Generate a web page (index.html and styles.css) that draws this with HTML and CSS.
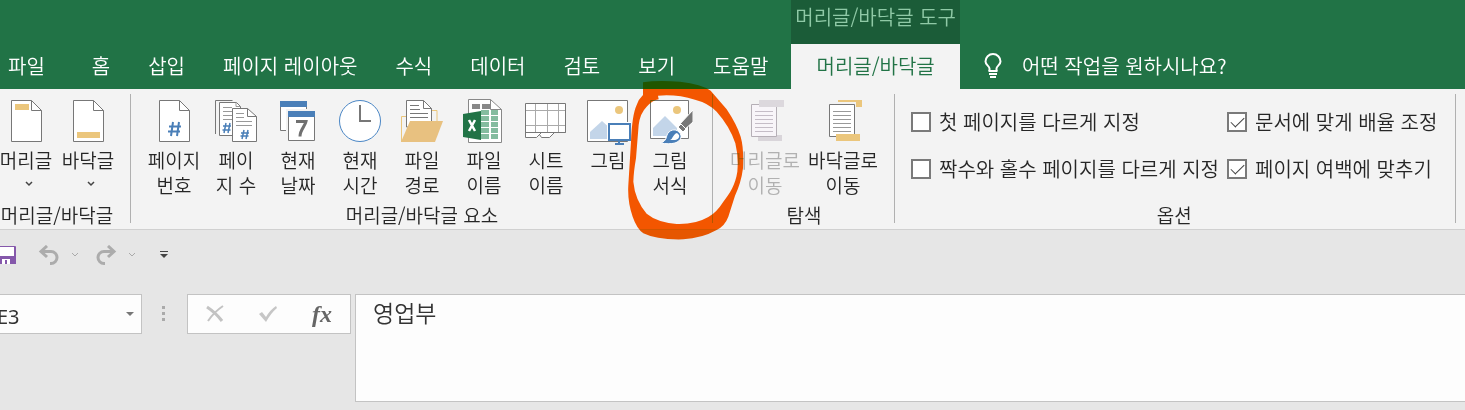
FILE: index.html
```html
<!DOCTYPE html>
<html lang="ko">

<head>
    <meta charset="UTF-8">
    <meta name="viewport" content="width=device-width, initial-scale=1.0">
    <title>머리글/바닥글</title>

    <link rel="stylesheet" href="styles.css">
</head>

<body>
    <header class="top">
        <nav class="tabs">
            <a class="tab file" href="#">파일</a>
            <a class="tab" href="#">홈</a>
            <a class="tab" href="#">삽입</a>
            <a class="tab" href="#">페이지 레이아웃</a>
            <a class="tab" href="#">수식</a>
            <a class="tab" href="#">데이터</a>
            <a class="tab" href="#">검토</a>
            <a class="tab" href="#">보기</a>
            <a class="tab" href="#">도움말</a>
            <div class="context">
                <span class="context-title">머리글/바닥글 도구</span>
                <a class="tab active" href="#">머리글/바닥글</a>
            </div>
        </nav>
        <button class="tell-me">
            <svg width="18" height="26" viewBox="0 0 18 26" fill="none" stroke="#fff" stroke-width="2">
                <path d="M5.500 18v-2.500C5.500 13 1.500 12 1.500 8.500a7.500 7.500 0 0 1 15 0C16.500 12 12.500 13 12.500 15.500V18" />
                <path d="M4.500 18h9M5 21h8M6 24h6" />
            </svg>
            <span>어떤 작업을 원하시나요?</span>
        </button>
    </header>

    <main class="ribbon">
        <section class="group first">
            <div class="tools">
                <button class="tool">
                    <svg width="44" height="44" viewBox="0 0 44 44">
                        <path d="M7.500 1.500h20l10 10v31h-30z" fill="#fff" stroke="#777" />
                        <path d="M27.500 1.500v10h10" fill="none" stroke="#777" />
                        <path d="M11 5h14v6H11z" fill="#ebc67c" />
                    </svg>
                    <span>머리글</span>
                    <svg class="chevron" width="8" height="6" viewBox="0 0 8 6"><path d="M1 1l3 3 3-3" fill="none" stroke="#444" stroke-width="1.500" /></svg>
                </button>
                <button class="tool">
                    <svg width="44" height="44" viewBox="0 0 44 44">
                        <path d="M7.500 1.500h20l10 10v31h-30z" fill="#fff" stroke="#777" />
                        <path d="M27.500 1.500v10h10" fill="none" stroke="#777" />
                        <path d="M11 33h23v6H11z" fill="#ebc67c" />
                    </svg>
                    <span>바닥글</span>
                    <svg class="chevron" width="8" height="6" viewBox="0 0 8 6"><path d="M1 1l3 3 3-3" fill="none" stroke="#444" stroke-width="1.500" /></svg>
                </button>
            </div>
            <h2>머리글/바닥글</h2>
        </section>

        <section class="group elements">
            <div class="tools">
                <button class="tool">
                    <svg width="44" height="44" viewBox="0 0 44 44">
                        <path d="M7.500 1.500h20l10 10v31h-30z" fill="#fff" stroke="#777" />
                        <path d="M27.500 1.500v10h10" fill="none" stroke="#777" />
                        <path d="M21 23l-2 14M27 23l-2 14M17 27.500h12M16 32.500h12" fill="none" stroke="#4a7fb8" stroke-width="2" />
                    </svg>
                    <span>페이지<br>번호</span>
                </button>
                <button class="tool">
                    <svg width="44" height="44" viewBox="0 0 44 44" fill="none" stroke="#777">
                        <path d="M1.500 35V1.500h17" />
                        <path d="M5.500 3.500h17l4 4v29h-21z" fill="#fff" />
                        <path d="M22 3.500v4h4M9 8.500h9M9 12.500h13M9 16.500h10M9 20.500h9" stroke="#999" />
                        <path d="M18.500 9.500h15l9 8v25h-24z" fill="#fff" />
                        <path d="M33.500 9.500v8h9" />
                        <path d="M22 14.500h8M22 18.500h8M22 22.500h16M22 26.500h16" stroke="#999" />
                        <path d="M12 24l-2 10M16 24l-2 10M9 27h8M8.500 31h8M30 31l-2 9M34 31l-2 9M27 34h8M26.500 37h8" stroke="#4a7fb8" stroke-width="1.500" />
                    </svg>
                    <span>페이<br>지 수</span>
                </button>
                <button class="tool">
                    <svg width="44" height="44" viewBox="0 0 44 44">
                        <path d="M4.500 2.500h26v29h-26z" fill="#fff" stroke="#777" />
                        <path d="M4 2h27v6H4z" fill="#4a7fb8" />
                        <path d="M10 10h30v34H10z" fill="#f3f3f3" />
                        <path d="M12.500 12.500h26v29h-26z" fill="#fff" stroke="#777" />
                        <path d="M12 12h27v6H12z" fill="#4a7fb8" />
                        <path d="M20 22.500h10c-1 5-6 8-6 15" fill="none" stroke="#707070" stroke-width="3" />
                    </svg>
                    <span>현재<br>날짜</span>
                </button>
                <button class="tool">
                    <svg width="44" height="44" viewBox="0 0 44 44">
                        <circle cx="22" cy="22" r="20.500" fill="#fff" stroke="#4a86c5" />
                        <path d="M22 6v16h11" fill="none" stroke="#777" stroke-width="2" />
                    </svg>
                    <span>현재<br>시간</span>
                </button>
                <button class="tool">
                    <svg width="44" height="44" viewBox="0 0 44 44">
                        <path d="M1.500 43V17.500h5M32 11.500h5V25" fill="none" stroke="#ebc67c" />
                        <path d="M6.500 28V1.500h17l8 8V28z" fill="#fff" stroke="#777" />
                        <path d="M23.500 1.500v8h8" fill="none" stroke="#777" />
                        <path d="M10 6.500h9M10 10.500h10M10 14.500h18M10 18.500h18" stroke="#777" />
                        <path d="M1 43l9-21h33l-8 21z" fill="#e8c180" />
                    </svg>
                    <span>파일<br>경로</span>
                </button>
                <button class="tool">
                    <svg width="44" height="44" viewBox="0 0 44 44">
                        <path d="M6.500.500h22l11 10v33h-33z" fill="#fff" stroke="#888" />
                        <path d="M28.500.500v10h11" fill="none" stroke="#888" />
                        <path d="M10 5h8v5h-8zM20 5h8v5h-8z" fill="#888" />
                        <path d="M19 11h8v5h-8zM29 11h7v5h-7zM19 17h8v5h-8zM29 17h7v5h-7zM19 23h8v5h-8zM29 23h7v5h-7zM19 29h8v5h-8zM29 29h7v5h-7zM19 35h8v5h-8zM29 35h7v5h-7z" fill="#84bc9f" />
                        <path d="M1 15l18-3v29L1 38z" fill="#217346" />
                        <path d="M7 21l6 11M13 21L7 32" stroke="#fff" stroke-width="2.500" />
                    </svg>
                    <span>파일<br>이름</span>
                </button>
                <button class="tool">
                    <svg width="44" height="44" viewBox="0 0 44 44" fill="none" stroke="#777">
                        <path d="M1.500 4.500h40v29h-11l-5 5h-8l-2-3-3 3h-11z" fill="#fff" />
                        <path d="M11.500 5v28M23.500 5v28M34.500 5v28M2 11.500h39M2 26.500h39" stroke="#aaa" />
                        <path d="M1.500 33.500h40M17 34l-4 4" />
                    </svg>
                    <span>시트<br>이름</span>
                </button>
                <button class="tool">
                    <svg width="46" height="46" viewBox="0 0 46 46">
                        <path d="M2.500 1.500h40v41h-40z" fill="#fff" stroke="#777" />
                        <circle cx="34" cy="11" r="4" fill="#ebc67c" />
                        <path d="M5 40V33l12-11 10 9v9z" fill="#c3d5e9" />
                        <path d="M22 23h26v19H22z" fill="#fff" />
                        <path d="M24 25h21v16H24z" fill="#fff" stroke="#4a7fb8" stroke-width="2" />
                        <path d="M34 41v3M30 45h9" stroke="#4a7fb8" stroke-width="2" />
                    </svg>
                    <span>그림</span>
                </button>
                <button class="tool marked">
                    <svg width="46" height="46" viewBox="0 0 46 46">
                        <path d="M3.500 1.500h38v38h-38z" fill="#fff" stroke="#777" />
                        <circle cx="30" cy="11" r="4" fill="#ebc67c" />
                        <path d="M6 37V29l12-12 12 12v8z" fill="#c3d5e9" />
                        <path d="M46 11v12l-9 8-5-5z" fill="#777" stroke="#fff" />
                        <path d="M34 25l5 5-3 3-5-5z" fill="#777" stroke="#fff" />
                        <path d="M13 44c5-1 6-4 7-8 2-5 8-7 12-3s2 9-4 11c-4 1-9 1-15 0z" fill="#4a7fb8" stroke="#fff" />
                        <path d="M23 41c3-1 3-6 7-7l2 2c1 3-2 5-5 5z" fill="#fff" />
                    </svg>
                    <span>그림<br>서식</span>
                    <svg class="marker" width="140" height="165" viewBox="0 0 420 495">
                        <path fill-rule="evenodd" d="M69 60V22Q110 15 180 20Q245 27 272 47L320 103Q350 148 362 185Q372 220 369 280Q363 325 345 362L325 425Q315 452 290 465Q245 490 190 493Q110 495 70 475Q50 460 38 425Q22 380 25 330L33 200Q36 120 50 90Q56 72 69 60ZM116 73L114 62Q170 57 225 74Q265 84 290 110Q330 155 346 205Q356 245 352 290C346 330 330 354 310 380Q290 412 265 426Q225 449 170 447Q110 441 80 416Q45 375 40 320Q41 290 48 250L56 150Q60 115 80 95Q98 76 116 73Z" />
                    </svg>
                </button>
            </div>
            <h2>머리글/바닥글 요소</h2>
        </section>

        <section class="group navigate">
            <div class="tools">
                <button class="tool wide" disabled>
                    <svg width="44" height="44" viewBox="0 0 44 44">
                        <path d="M15 36h24v6H15z" fill="#d9d5da" />
                        <path d="M8.500 5.500h25v32h-25z" fill="#f8f5f9" stroke="#b5afb6" />
                        <path d="M12 12.500h18M12 16.500h18M12 20.500h18M12 24.500h18M12 28.500h18M12 32.500h18" stroke="#c5bdc7" />
                        <path d="M16 1h25v7H16z" fill="#dcd8dd" />
                    </svg>
                    <span>머리글로<br>이동</span>
                </button>
                <button class="tool wide">
                    <svg width="44" height="44" viewBox="0 0 44 44">
                        <path d="M17 1h24v7H17z" fill="#ebc67c" />
                        <path d="M6 3h29v36H6z" fill="#f3f3f3" />
                        <path d="M8.500 5.500h25v32h-25z" fill="#fff" stroke="#777" />
                        <path d="M12 12.500h18M12 16.500h18M12 20.500h18M12 24.500h18M12 28.500h18M12 32.500h18" stroke="#999" />
                        <path d="M15 35h24v7H15z" fill="#ebc67c" />
                    </svg>
                    <span>바닥글로<br>이동</span>
                </button>
            </div>
            <h2>탐색</h2>
        </section>

        <section class="group options">
            <div class="checks">
                <label><input type="checkbox">첫 페이지를 다르게 지정</label>
                <label><input type="checkbox" checked>문서에 맞게 배율 조정</label>
                <label><input type="checkbox">짝수와 홀수 페이지를 다르게 지정</label>
                <label><input type="checkbox" checked>페이지 여백에 맞추기</label>
            </div>
            <h2>옵션</h2>
        </section>
    </main>

    <div class="quick">
        <button aria-label="저장">
            <svg width="16" height="20" viewBox="0 0 16 20">
                <path d="M0 1h15q1 0 1 1v17H0z" fill="#8558ab" />
                <path d="M0 2h14v9H0zM2 14h8v5H7v-4H5v4H2z" fill="#fff" />
            </svg>
        </button>
        <button class="undo" aria-label="실행 취소">
            <svg width="22" height="20" viewBox="0 0 22 20" fill="none" stroke="#acacac" stroke-width="3"><path d="M9 1L3 6.500 9 12M3 6.500h10a6 6 0 0 1 0 12h-1" /></svg>
        </button>
        <button class="arrow" aria-label="실행 취소 목록">
            <svg width="8" height="6" viewBox="0 0 8 6"><path d="M1 1l3 3 3-3" fill="none" stroke="#aaa" /></svg>
        </button>
        <button class="redo" aria-label="다시 실행">
            <svg width="22" height="20" viewBox="0 0 22 20" fill="none" stroke="#acacac" stroke-width="3"><path d="M13 1l6 5.500-6 5.500M19 6.500H9a6 6 0 0 0 0 12h1" /></svg>
        </button>
        <button class="arrow" aria-label="다시 실행 목록">
            <svg width="8" height="6" viewBox="0 0 8 6"><path d="M1 1l3 3 3-3" fill="none" stroke="#aaa" /></svg>
        </button>
        <button class="more" aria-label="도구 모음 사용자 지정">
            <svg width="8" height="8" viewBox="0 0 8 8"><path d="M0 0h8v1H0zM0 3h8L4 7z" fill="#444" /></svg>
        </button>
    </div>

    <div class="formula">
        <div class="name-box">
            <input type="text" value="E3" aria-label="이름 상자">
            <button aria-label="이름 목록">
                <svg width="8" height="4" viewBox="0 0 8 4"><path d="M0 0h8L4 4z" fill="#777" /></svg>
            </button>
        </div>
        <svg class="dots" width="3" height="15" viewBox="0 0 3 15"><path d="M0 0h3v3H0zM0 6h3v3H0zM0 12h3v3H0z" fill="#aaa" /></svg>
        <div class="entry">
            <button aria-label="취소">
                <svg width="18" height="18" viewBox="0 0 18 18" fill="none" stroke="#c3c3c3"><path d="M1 2q9 6 15 14" stroke-width="3" /><path d="M17 1Q8 7 2 16" stroke-width="2" /></svg>
            </button>
            <button aria-label="입력">
                <svg width="20" height="18" viewBox="0 0 20 18"><path d="M1 9l3-2 4 5q4-7 10-11l1 2Q13 8 8 17z" fill="#c6c6c6" /></svg>
            </button>
            <button class="fx" aria-label="함수 삽입">fx</button>
        </div>
        <textarea aria-label="수식 입력줄">영업부</textarea>
    </div>
</body>

</html>
```

FILE: styles.css
```css
* {
    margin: 0;
    padding: 0;
    box-sizing: border-box;
}

body {
    background-color: #e6e6e6;
    color: #262626;
    font-family: "Noto Sans CJK KR", sans-serif;
    font-size: 19px;
    font-weight: 350;
}

button {
    border: none;
    background: none;
    color: inherit;
    font: inherit;
}

svg {
    display: block;
    flex-shrink: 0;
}

/* title bar and tabs */
.top {
    display: flex;
    align-items: flex-end;
    background-color: #217346;
    color: white;
    font-size: 20px;
    white-space: nowrap;
}

.tabs {
    display: flex;
    align-items: flex-end;
}

.tab {
    padding: 0 19px;
    height: 45px;
    line-height: 43px;
    color: white;
    text-decoration: none;
}

.file {
    padding-left: 8px;
    padding-right: 28px;
}

.context {
    display: flex;
    flex-direction: column;
    margin-left: 4px;
    text-align: center;
}

.context-title {
    height: 44px;
    padding: 0 4px;
    line-height: 33px;
    background-color: #1b5c38;
    color: #8fc9a6;
}

.active {
    background-color: #f3f3f3;
    color: #217346;
}

.tell-me {
    display: flex;
    align-items: center;
    gap: 20px;
    height: 45px;
    padding-left: 24px;
    padding-bottom: 2px;
}

/* ribbon */
.ribbon {
    display: flex;
    padding: 5px 0 6px;
    background-color: #f3f3f3;
    border-bottom: 1px solid #d0d0d0;
}

.group {
    display: flex;
    flex-direction: column;
    justify-content: space-between;
    height: 129px;
    border-right: 1px solid #b0b0b0;
}

.group h2 {
    font-size: 19px;
    font-weight: 350;
    line-height: 16px;
    text-align: center;
    white-space: nowrap;
}

.first {
    margin-left: -5px;
    padding-right: 11px;
}

.elements {
    padding: 0 11px 0 12px;
}

.navigate {
    padding: 0 12px 0 13px;
}

.tools {
    display: flex;
    padding-top: 5px;
}

.tool {
    display: flex;
    flex-direction: column;
    align-items: center;
    width: 62px;
    height: 100px;
    line-height: 25px;
    white-space: nowrap;
}

.tool > svg[height="44"] {
    margin-bottom: 4px;
}

.tool > svg[height="46"] {
    margin-bottom: 2px;
}

.wide {
    width: 78px;
}

.tool:disabled {
    color: #b1b1b1;
}

.tool .chevron {
    margin: 9px 0 0 6px;
}

.marked {
    position: relative;
}

/* pen stroke drawn over the ribbon */
.marker {
    position: absolute;
    left: -19px;
    top: -24px;
    fill: #f55600;
    mix-blend-mode: darken;
    pointer-events: none;
}

.options {
    padding: 0 18px 0 16px;
}

.checks {
    display: grid;
    grid-template-columns: auto auto;
    column-gap: 8px;
    row-gap: 17px;
    padding-top: 13px;
    font-size: 20px;
    line-height: 30px;
    white-space: nowrap;
}

.checks label {
    display: flex;
    align-items: center;
    gap: 8px;
}

.checks input {
    appearance: none;
    width: 20px;
    height: 20px;
    border: 2px solid #7a7a7a;
    background-color: white;
}

.checks input:checked::before {
    content: "";
    display: block;
    width: 12px;
    height: 6px;
    margin: 3px 2px;
    border-left: 1px solid #444;
    border-bottom: 1px solid #444;
    transform: rotate(-45deg);
}

/* quick access toolbar */
.quick {
    display: flex;
    align-items: center;
    height: 49px;
}

.undo {
    margin-left: 22px;
}

.arrow {
    margin-left: 11px;
}

.redo {
    margin-left: 16px;
}

.more {
    margin-left: 24px;
}

/* formula bar */
.formula {
    display: flex;
    align-items: flex-start;
    margin-top: 15px;
}

.name-box {
    display: flex;
    align-items: center;
    width: 150px;
    height: 40px;
    margin-left: -8px;
    padding: 0 7px 0 4px;
    background-color: #fdfdfd;
    border: 1px solid #c3c3c3;
}

.name-box input {
    flex: 1;
    min-width: 0;
    padding-top: 4px;
    border: none;
    background: none;
    color: #333;
    font-family: "Noto Sans", sans-serif;
    font-size: 20px;
}

.dots {
    margin: 12px 22px 0 20px;
}

.entry {
    display: flex;
    align-items: center;
    justify-content: space-between;
    width: 164px;
    height: 40px;
    padding: 0 18px;
    background-color: #fdfdfd;
    border: 1px solid #c3c3c3;
}

.fx {
    color: #666;
    font-family: "Liberation Serif", serif;
    font-size: 24px;
    font-style: italic;
    font-weight: bold;
    line-height: 30px;
}

.formula textarea {
    flex: 1;
    height: 108px;
    margin-left: 4px;
    padding: 0 17px;
    border: 1px solid #c3c3c3;
    border-right: none;
    background-color: #fdfdfd;
    color: #333;
    font-family: "Noto Sans CJK KR", sans-serif;
    font-size: 23px;
    font-weight: 350;
    line-height: 34px;
    resize: none;
}
```
